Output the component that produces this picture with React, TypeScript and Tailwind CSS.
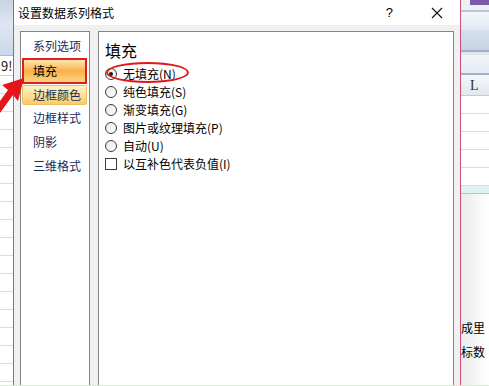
import React from "react";

const font = "font-['Noto_Sans_CJK_SC','Noto_Sans_CJK_JP',sans-serif]";

const fillOptions = [
  { label: "无填充(N)", checked: true },
  { label: "纯色填充(S)" },
  { label: "渐变填充(G)" },
  { label: "图片或纹理填充(P)" },
  { label: "自动(U)" },
];

function Radio({ checked }: { checked?: boolean }) {
  return (
    <span className="w-[12px] h-[12px] rounded-full border border-[#3c3c3c] bg-gradient-to-br from-[#e8e8e8] to-white flex items-center justify-center shrink-0">
      {checked && <span className="w-[4px] h-[4px] rounded-full bg-[#1a1a1a]" />}
    </span>
  );
}

function GridRows({ count }: { count: number }) {
  return (
    <>
      {Array.from({ length: count }).map((_, i) => (
        <div key={i} className="h-[18px] border-b border-[#d8dde4] bg-white shrink-0" />
      ))}
    </>
  );
}

export default function App() {
  return (
    <div className={`relative w-[489px] h-[386px] flex overflow-hidden bg-white ${font}`}>
      {/* excel behind, left */}
      <div className="w-[13px] flex flex-col shrink-0">
        <div className="h-[25px] bg-gradient-to-b from-[#c9d3e2] to-[#dfe7f2] shrink-0" />
        <div className="h-[31px] bg-gradient-to-b from-[#dde6f2] to-[#cbd8ea] border-b border-[#a9b8cc] shrink-0" />
        <div className="h-[20px] bg-white border-b border-[#c9d2dd] text-[13px] leading-[20px] text-[#222] pl-[1px] shrink-0">9!</div>
        <GridRows count={18} />
      </div>

      {/* dialog */}
      <div className="w-[448px] h-full flex flex-col border-l border-r border-[#c84f7c] shrink-0">
        <div className="h-[25px] bg-white flex items-center pl-[4px] pr-[17px] shrink-0">
          <span className="text-[12px] text-black leading-none">设置数据系列格式</span>
          <span className="ml-auto mr-[38px] text-[13px] text-black font-['Liberation_Sans',sans-serif] leading-none">?</span>
          <svg width="12" height="12" viewBox="0 0 12 12" className="shrink-0">
            <path d="M1 1 L11 11 M11 1 L1 11" stroke="#111" strokeWidth="1.1" fill="none" />
          </svg>
        </div>
        <div className="flex-1 bg-[#f0f0f0] pt-[6px] px-[6px] flex gap-[8px]">
          {/* category list */}
          <div className="w-[70px] h-[400px] bg-white border border-[#858585] pt-[1px] flex flex-col text-[12px] text-[#1c2a58]">
            <div className="h-[25px] flex items-center pl-[12px]">系列选项</div>
            <div className="h-[26px] ml-[1px] w-[65px] border-2 border-[#e01e1e] bg-gradient-to-b from-[#fde6ad] via-[#f8b048] to-[#fcd683] flex items-center pl-[9px] text-black">
              填充
            </div>
            <div className="h-[20px] mt-[1px] ml-[1px] w-[65px] rounded-[2px] border border-[#f0c060] bg-gradient-to-b from-[#fff3c8] to-[#f9cc66] flex items-center pl-[10px]">
              边框颜色
            </div>
            <div className="h-[24px] mt-[1px] flex items-center pl-[12px]">边框样式</div>
            <div className="h-[24px] flex items-center pl-[12px]">阴影</div>
            <div className="h-[24px] flex items-center pl-[12px]">三维格式</div>
          </div>

          {/* fill panel */}
          <div className="w-[356px] h-[400px] bg-white border border-[#858585] pl-[6px] pt-[8px] flex flex-col text-[12px] text-black">
            <div className="text-[16px] leading-[20px] h-[20px]">填充</div>
            <div className="mt-[5px] flex flex-col">
              {fillOptions.map((o) => (
                <div key={o.label} className="h-[18px] flex items-center gap-[6px]">
                  <Radio checked={o.checked} />
                  <span>{o.label}</span>
                </div>
              ))}
              <div className="h-[18px] flex items-center gap-[6px]">
                <span className="w-[12px] h-[12px] border border-[#3c3c3c] bg-white shrink-0" />
                <span>以互补色代表负值(I)</span>
              </div>
            </div>
          </div>
        </div>
      </div>

      {/* excel behind, right */}
      <div className="w-[28px] flex flex-col shrink-0">
        <div className="h-[5px] flex shrink-0">
          <div className="w-[9px] bg-[#eef0f4]" />
          <div className="flex-1 bg-[#7a5aa8]" />
        </div>
        <div className="h-[5px] bg-[#eef0f4] shrink-0" />
        <div className="h-[2px] bg-[#b8c6da] shrink-0" />
        <div className="h-[18px] bg-gradient-to-b from-[#f2f5fa] to-[#e3e9f2] shrink-0" />
        <div className="h-[22px] bg-gradient-to-b from-[#d6e0ee] to-[#c6d3e6] border-b-2 border-[#9fb0c8] shrink-0" />
        <div className="h-[3px] bg-[#dfe6f0] shrink-0" />
        <div className="h-[20px] bg-gradient-to-b from-[#f3f5f8] to-[#e6ebf2] border-b-2 border-[#9fb0c8] shrink-0" />
        <div className="h-[21px] bg-gradient-to-b from-[#f4f6f9] to-[#e3e8ef] border-b border-[#c3cad4] text-[14px] leading-[21px] pl-[9px] text-[#333] font-['Liberation_Serif',serif] shrink-0">
          L
        </div>
        <GridRows count={5} />
        <div className="h-[8px] bg-[#def4f4] border-b border-[#b9c2cc] shrink-0" />
        <div className="h-[122px] bg-gradient-to-r from-[#ebebeb] to-white shrink-0" />
        <div className="h-[24px] bg-gradient-to-r from-[#ebebeb] to-white text-[12px] leading-[24px] text-black shrink-0 whitespace-nowrap">成里</div>
        <div className="h-[24px] bg-gradient-to-r from-[#ebebeb] to-white text-[12px] leading-[24px] text-black shrink-0 whitespace-nowrap">标数</div>
        <div className="flex-1 bg-gradient-to-r from-[#ebebeb] to-white" />
      </div>

      {/* bottom edge */}
      <div className="absolute left-0 right-0 bottom-0 h-[1px] bg-[#d4ecd9]" />

      {/* annotation: ellipse round the first option */}
      <div className="absolute left-[106px] top-[62px] w-[83px] h-[21px] rounded-[50%] border-[2.5px] border-[#e01818]" />

      {/* annotation: arrow to the fill item */}
      <svg className="absolute left-0 top-[74px]" width="26" height="44" viewBox="0 0 26 44">
        <polygon points="24,4 2,11 8,16 0,27 0,39 13,21 18,27" fill="#e4161b" />
      </svg>
    </div>
  );
}
